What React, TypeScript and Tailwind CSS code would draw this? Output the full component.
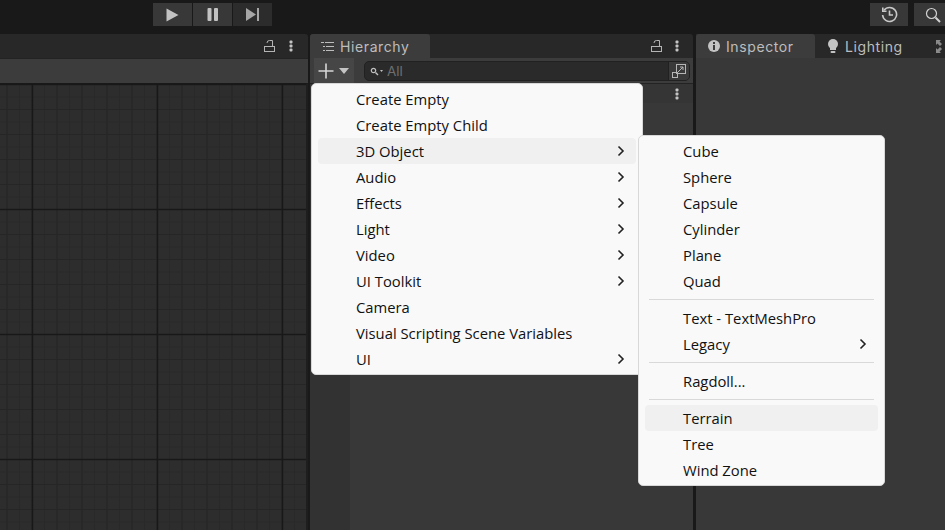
const rootItems = [
  { label: 'Create Empty' },
  { label: 'Create Empty Child' },
  { label: '3D Object', arrow: true, active: true },
  { label: 'Audio', arrow: true },
  { label: 'Effects', arrow: true },
  { label: 'Light', arrow: true },
  { label: 'Video', arrow: true },
  { label: 'UI Toolkit', arrow: true },
  { label: 'Camera' },
  { label: 'Visual Scripting Scene Variables' },
  { label: 'UI', arrow: true },
]

const subGroups = [
  [{ label: 'Cube' }, { label: 'Sphere' }, { label: 'Capsule' }, { label: 'Cylinder' }, { label: 'Plane' }, { label: 'Quad' }],
  [{ label: 'Text - TextMeshPro' }, { label: 'Legacy', arrow: true }],
  [{ label: 'Ragdoll...' }],
  [{ label: 'Terrain', active: true }, { label: 'Tree' }, { label: 'Wind Zone' }],
]

const Chevron = () => (
  <svg width="8" height="12" viewBox="0 0 8 12" className="absolute right-[11px] top-[7px]">
    <path d="M1.5 1.5 L6 6 L1.5 10.5" fill="none" stroke="#222" strokeWidth="1.6" />
  </svg>
)

const MenuItem = ({ label, arrow, active, pad }: { label: string; arrow?: boolean; active?: boolean; pad: string }) => (
  <div className={`relative h-[26px] flex items-center rounded-[4px] text-[14.8px] text-[#111] ${pad} ${active ? 'bg-[#f0f0f0]' : ''}`}>
    {label}
    {arrow && <Chevron />}
  </div>
)

const LockIcon = () => (
  <svg width="11" height="12" viewBox="0 0 11 12" fill="none" stroke="#b4b4b4" strokeWidth="1">
    <rect x="0.5" y="6.5" width="10" height="5" />
    <path d="M3 3 Q3 0.5 5.5 0.5 H8.5 V6.5" />
  </svg>
)

const Dots = () => (
  <svg width="4" height="12" viewBox="0 0 4 12" fill="#c4c4c4">
    <rect x="0.5" y="0.5" width="3" height="3" rx="1" />
    <rect x="0.5" y="4.5" width="3" height="3" rx="1" />
    <rect x="0.5" y="8.5" width="3" height="3" rx="1" />
  </svg>
)

// scene view grid, lines every 12.5 / 25 / 125 px
const SceneGrid = () => (
  <svg className="w-full h-full block">
    <defs>
      <pattern id="minor" x="0.75" y="-5.75" width="12.5" height="12.5" patternUnits="userSpaceOnUse">
        <path d="M6.25 0 V12.5 M0 6.25 H12.5" stroke="#292929" strokeWidth="1" fill="none" />
      </pattern>
      <pattern id="mid" x="19.5" y="-12" width="25" height="25" patternUnits="userSpaceOnUse">
        <path d="M12.5 0 V25 M0 12.5 H25" stroke="#262626" strokeWidth="1.2" fill="none" />
      </pattern>
      <pattern id="major" x="-30" y="-62" width="125" height="125" patternUnits="userSpaceOnUse">
        <path d="M62.5 0 V125 M0 62.5 H125" stroke="#181818" strokeWidth="1.5" fill="none" />
      </pattern>
    </defs>
    <rect width="100%" height="100%" fill="#2d2d2d" />
    <rect width="100%" height="100%" fill="url(#minor)" />
    <rect width="100%" height="100%" fill="url(#mid)" />
    <rect width="100%" height="100%" fill="url(#major)" />
  </svg>
)

const App = () => {
  return (
    <div className="relative w-[945px] h-[530px] overflow-hidden bg-[#191919] flex flex-col font-['Inter',sans-serif]">
      {/* top toolbar */}
      <div className="relative h-[34px] shrink-0 pt-[3px] pl-[153px] flex">
        <div className="flex gap-px h-[23px]">
          <button className="w-[39px] bg-[#383838] flex items-center justify-center">
            <svg width="13" height="14" viewBox="0 0 13 14"><path d="M0.5 0.5 L12.5 7 L0.5 13.5 Z" fill="#c2c2c2" /></svg>
          </button>
          <button className="w-[39px] bg-[#383838] flex items-center justify-center">
            <svg width="12" height="13" viewBox="0 0 12 13" fill="#c2c2c2">
              <rect x="0.5" y="0" width="4" height="13" rx="1" />
              <rect x="7" y="0" width="4" height="13" rx="1" />
            </svg>
          </button>
          <button className="w-[39px] bg-[#2c2c2c] flex items-center justify-center">
            <svg width="14" height="13" viewBox="0 0 14 13" fill="#a6a6a6">
              <path d="M0 0 L10 6.5 L0 13 Z" />
              <rect x="11" y="0" width="2" height="13" />
            </svg>
          </button>
        </div>
        <div className="ml-auto flex gap-[6px] h-[23px]">
          <button className="w-[38px] bg-[#383838] flex items-center justify-center">
            <svg width="17" height="17" viewBox="0 0 17 17" fill="none" stroke="#c8c8c8" strokeWidth="1.6">
              <path d="M3 4.2 A7 7 0 1 1 1.6 9" />
              <path d="M1.8 1.5 V5.2 H5.5" />
              <path d="M8.5 4.5 V9 H12" />
            </svg>
          </button>
          <button className="w-[31px] bg-[#383838] flex items-center pl-[11px]">
            <svg width="16" height="16" viewBox="0 0 16 16" fill="none" stroke="#d2d2d2">
              <circle cx="6.5" cy="6.5" r="5" strokeWidth="1.2" />
              <path d="M10.5 10.5 L15 15" strokeWidth="2" />
            </svg>
          </button>
        </div>
      </div>

      <div className="flex-1 flex min-h-0">
        {/* scene panel */}
        <div className="w-[308px] flex flex-col">
          <div className="h-[24px] bg-[#282828] flex items-center justify-end gap-[14px] pr-[15px] rounded-tr-[3px]">
            <LockIcon />
            <Dots />
          </div>
          <div className="h-[25px] bg-[#3c3c3c] border-t border-[#232323]" />
          <div className="flex-1 min-h-0 border-t border-[#191919] border-r-2 border-r-[#1e1e1e]">
            <SceneGrid />
          </div>
        </div>

        {/* hierarchy panel */}
        <div className="w-[383px] ml-[2px] flex flex-col">
          <div className="h-[24px] bg-[#282828] flex items-stretch rounded-t-[3px]">
            <div className="w-[120px] bg-[#3c3c3c] rounded-t-[3px] flex items-center pl-[11px] gap-[6px] text-[14px] tracking-[0.6px] text-[#bdbdbd]">
              <svg width="13" height="11" viewBox="0 0 13 11" fill="none" stroke="#bdbdbd" strokeWidth="1">
                <path d="M4 1.5 H13 M5 5.5 H13 M5 9.5 H13" />
                <path d="M0 1.5 H3 M2 5.5 H4 M2 9.5 H4" />
              </svg>
              Hierarchy
            </div>
            <div className="ml-auto flex items-center gap-[13px] pr-[14px]">
              <LockIcon />
              <Dots />
            </div>
          </div>
          <div className="h-[25px] bg-[#3c3c3c] flex items-center">
            <div className="w-[40px] h-full ml-[4px] bg-[#464646] flex items-center pl-[4px] gap-[5px]">
              <svg width="16" height="16" viewBox="0 0 16 16" stroke="#d6d6d6" strokeWidth="1.6"><path d="M8 0.5 V15.5 M0.5 8 H15.5" /></svg>
              <svg width="10" height="6" viewBox="0 0 10 6"><path d="M0 0 H10 L5 6 Z" fill="#c4c4c4" /></svg>
            </div>
            <div className="ml-[10px] mt-px w-[326px] h-[20px] bg-[#2a2a2a] rounded-[5px] border border-[#212121] flex items-center pl-[5px]">
              <svg width="13" height="9" viewBox="0 0 13 9" fill="none" stroke="#c0c0c0">
                <circle cx="3.5" cy="3.5" r="2.2" strokeWidth="1.2" />
                <path d="M5.5 5.5 L8 8" strokeWidth="1.4" />
                <path d="M10 3 H13 L11.5 5 Z" fill="#c0c0c0" stroke="none" />
              </svg>
              <span className="ml-[4px] text-[13.5px] text-[#6e6e6e]">All</span>
              <div className="ml-auto w-[21px] h-full bg-[#3a3a3a] rounded-r-[4px] border-l border-[#212121] flex items-center justify-center">
                <svg width="16" height="16" viewBox="0 0 16 16" fill="none" stroke="#b6b6b6">
                  <rect x="5.5" y="1.5" width="9" height="9" />
                  <rect x="1.5" y="9.5" width="5" height="5" />
                  <path d="M7 9 L12 4 M9 4 H12 V7" />
                </svg>
              </div>
            </div>
          </div>
          <div className="h-[20px] bg-[#353535] border-t border-[#232323] flex items-center justify-end pr-[14px]">
            <Dots />
          </div>
          <div className="flex-1 flex">
            <div className="w-[40px] bg-[#323232]" />
            <div className="flex-1 bg-[#383838]" />
          </div>
        </div>

        {/* inspector panel */}
        <div className="flex-1 ml-[3px] flex flex-col">
          <div className="h-[24px] bg-[#282828] flex items-stretch text-[14px] tracking-[0.6px] text-[#bdbdbd]">
            <div className="w-[119px] bg-[#3c3c3c] rounded-t-[3px] flex items-center pl-[12px] gap-[6px]">
              <svg width="12" height="12" viewBox="0 0 12 12">
                <circle cx="6" cy="6" r="6" fill="#c4c4c4" />
                <rect x="5" y="2" width="2" height="2" fill="#3c3c3c" />
                <rect x="5" y="5" width="2" height="5" fill="#3c3c3c" />
              </svg>
              Inspector
            </div>
            <div className="flex items-center pl-[12px] gap-[6px]">
              <svg width="12" height="15" viewBox="0 0 12 15" fill="#c4c4c4">
                <circle cx="6" cy="5" r="5" />
                <rect x="3" y="8" width="6" height="3" />
                <rect x="3.5" y="12" width="5" height="2" rx="1" />
              </svg>
              Lighting
            </div>
            <div className="ml-auto mr-[-7px] flex items-center">
              <svg width="16" height="13" viewBox="0 0 16 13" fill="#8a8a8a">
                <path d="M0 0 H5 L3.5 1.5 L6 4 L4 6 L1.5 3.5 L0 5 Z" />
                <path d="M0 13 H5 L3.5 11.5 L6 9 L4 7 L1.5 9.5 L0 8 Z" />
                <path d="M16 0 H11 L12.5 1.5 L10 4 L12 6 L14.5 3.5 L16 5 Z" />
                <path d="M16 13 H11 L12.5 11.5 L10 9 L12 7 L14.5 9.5 L16 8 Z" />
              </svg>
            </div>
          </div>
          <div className="flex-1 bg-[#383838]" />
        </div>
      </div>

      {/* create menu */}
      <div className="absolute left-[311px] top-[83px] w-[332px] bg-[#f9f9f9] rounded-[5px] border border-[#d8d8d8] px-[6px] pt-[2px] pb-[2px] font-['Open_Sans',sans-serif]">
        {rootItems.map((item) => (
          <MenuItem key={item.label} {...item} pad="pl-[38px]" />
        ))}
      </div>

      {/* 3D object submenu */}
      <div className="absolute left-[638px] top-[135px] w-[247px] bg-[#f9f9f9] rounded-[5px] border border-[#d8d8d8] px-[6px] pt-[2px] pb-[2px] font-['Open_Sans',sans-serif]">
        {subGroups.map((group, i) => (
          <div key={i}>
            {i > 0 && <div className="h-px bg-[#d9d9d9] mx-[4px] mt-[5px] mb-[5px]" />}
            {group.map((item) => (
              <MenuItem key={item.label} {...item} pad="pl-[38px]" />
            ))}
          </div>
        ))}
      </div>
    </div>
  )
}

export default App
